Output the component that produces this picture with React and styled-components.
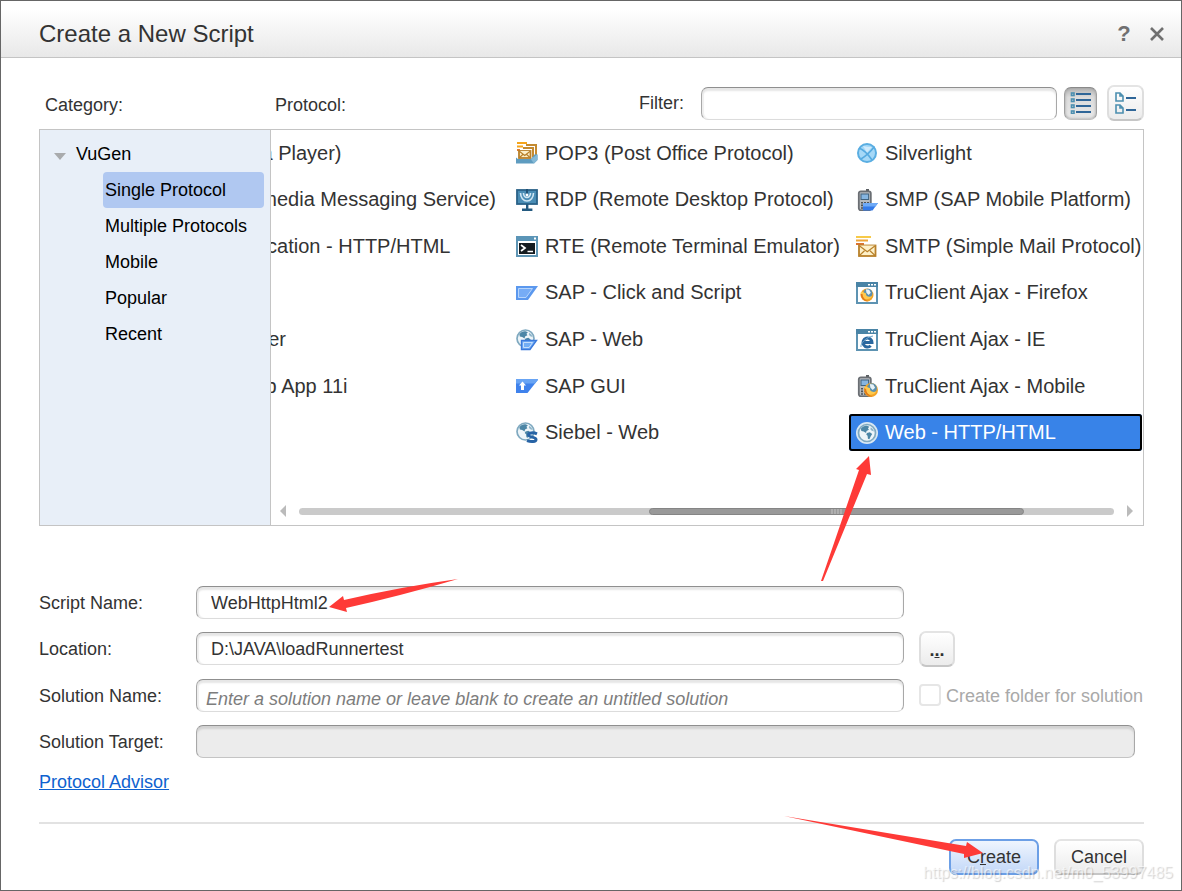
import React, { useState } from "react";
import styled, { createGlobalStyle, css } from "styled-components";

const columns = [
  {
    items: [
      { name: "MMS (Media Player)" },
      { name: "MMS (Multimedia Messaging Service)" },
      { name: "Mobile Application - HTTP/HTML" },
      null,
      { name: "Oracle - 2 Tier" },
      { name: "Oracle - Web App 11i" },
    ],
  },
  {
    width: 334,
    items: [
      { name: "POP3 (Post Office Protocol)", icon: "pop3" },
      { name: "RDP (Remote Desktop Protocol)", icon: "rdp" },
      { name: "RTE (Remote Terminal Emulator)", icon: "rte" },
      { name: "SAP - Click and Script", icon: "sapClick" },
      { name: "SAP - Web", icon: "sapWeb" },
      { name: "SAP GUI", icon: "sapGui" },
      { name: "Siebel - Web", icon: "siebel" },
    ],
  },
  {
    width: 293,
    items: [
      { name: "Silverlight", icon: "silverlight" },
      { name: "SMP (SAP Mobile Platform)", icon: "smp" },
      { name: "SMTP (Simple Mail Protocol)", icon: "smtp" },
      { name: "TruClient Ajax - Firefox", icon: "firefox" },
      { name: "TruClient Ajax - IE", icon: "ie" },
      { name: "TruClient Ajax - Mobile", icon: "mobile" },
      { name: "Web - HTTP/HTML", icon: "web" },
    ],
  },
];

const categories = [
  "Single Protocol",
  "Multiple Protocols",
  "Mobile",
  "Popular",
  "Recent",
];

const Globe = ({ cx = 10, cy = 10, r = 9 }) => (
  <g transform={`translate(${cx} ${cy}) scale(${r / 9})`}>
    <circle r="9" fill="#eef5f9" stroke="#7fa9c0" strokeWidth="1.8" />
    <path
      d="M-6.5-4.5C-5-7-2-8 0-7.6L2.5-6.5 1-5 2-3.5-.5-2-1 0-3.5-1.5-6-2z"
      fill="#4c86a6"
    />
    <path d="M0 0 3-.8 5.5 1 4 3.5 2.5 6.5 1 6 .6 3-.8 1.5z" fill="#4c86a6" />
    <path d="M4-6 6.5-4 7.4-1.5 5-2.5 3.5-4z" fill="#8fb6cb" />
  </g>
);

const Envelope = ({ x, y, w, h }) => (
  <g fill="#fdf0c8" stroke="#b8802a" strokeWidth="1.8">
    <rect x={x} y={y} width={w} height={h} />
    <path
      d={`M${x} ${y}L${x + w / 2} ${y + h / 2 + 1}L${x + w} ${y}M${x} ${y + h}L${x + w / 3} ${y + h / 2}M${x + w} ${y + h}L${x + (w * 2) / 3} ${y + h / 2}`}
      strokeWidth="1.2"
    />
  </g>
);

const BrowserWindow = ({ children }) => (
  <>
    <rect x="1" y="1" width="20" height="20" fill="#fff" stroke="#5d93b2" strokeWidth="2" />
    <path d="M0 0h22v5H0z" fill="#4a84a6" />
    <path d="M12 2h2v1.5h-2zM15 2h2v1.5h-2zM18 2h2v1.5h-2z" fill="#fff" />
    {children}
  </>
);

const FirefoxBall = ({ cx, cy, r }) => (
  <g transform={`translate(${cx} ${cy}) scale(${r / 6})`}>
    <circle r="6" fill="#f3a426" />
    <circle cx=".8" cy="-1.6" r="4.2" fill="#5a91b0" />
    <path d="M-1-5.2 2-4.8 3.5-2 1.5 0-.5-2z" fill="#e8f2f7" />
    <path d="M-5.8-2.5C-4-4-3-2-.8-1.5-1.5.5 1 2.5 4.6 1.2 3 4.5-3 5.5-5.2 1z" fill="#ffc94d" />
    <path d="M-5.8-1C-5.5 4.5-1 6 1.5 5.8-2 4.5-4 2.5-4.2-1z" fill="#e27818" />
  </g>
);

const Phone = () => (
  <>
    <path d="M10 0h3v3h-3z" fill="#5b5f63" />
    <rect x="2.8" y="2.3" width="12" height="19" rx="2" fill="#b7bbbf" stroke="#6a6e73" strokeWidth="1.8" />
    <rect x="5" y="5" width="7.6" height="5.5" fill="#86b5e0" stroke="#41637f" />
    <path
      d="M5 13h2v1.6H5zm3 0h2v1.6H8zm3 0h2v1.6h-2zM5 15.6h2v1.6H5zm3 0h2v1.6H8zm3 0h2v1.6h-2zM5 18.2h2v1.6H5zm3 0h2v1.6H8z"
      fill="#4f5459"
    />
  </>
);

const icons = {
  pop3: (
    <>
      <path d="M1 1h10M1 4.5h6" stroke="#f5a51c" strokeWidth="1.8" />
      <path d="M1 8h3" stroke="#e0701c" strokeWidth="1.8" />
      <path d="M10 3h10v10M7 6h10v9" fill="none" stroke="#c48a30" strokeWidth="2" />
      <Envelope x={3} y={9} w={11.5} h={7} />
      <path d="M0 15.5l2 1.5h13l4-5 2.5 1v5L18 21.5H0z" fill="#5e9cc0" />
      <path d="M15 17.5 21.5 12v6L18 21.5z" fill="#84b9d6" />
    </>
  ),
  rdp: (
    <>
      <rect x="1" y="1" width="20" height="14" fill="#4a8db5" stroke="#2b6288" strokeWidth="1.8" />
      <path d="M4.5 4a6.5 8 0 0 0 13 0M7.5 4a3.5 4.5 0 0 0 7 0" fill="none" stroke="#cfe6f3" strokeWidth="1.6" />
      <path d="M11 0v6" stroke="#1f5276" strokeWidth="2" />
      <circle cx="11" cy="6" r="1.4" fill="#fff" />
      <path d="M10 15h2.4v5H10zM6 19.5h10.4V22H6z" fill="#235a80" />
    </>
  ),
  rte: (
    <>
      <rect x="1" y="2" width="20" height="19" fill="#fff" stroke="#5f95b4" strokeWidth="2" />
      <path d="M0 1h22v5H0z" fill="#5b95b7" />
      <path d="M18 2.5h2v2h-2z" fill="#fff" />
      <path d="M3 8h16v11H3z" fill="#151b20" />
      <path d="M5 10l4 3-4 3M11.5 16.5H17" fill="none" stroke="#fff" strokeWidth="1.7" />
    </>
  ),
  sapClick: (
    <>
      <path d="M0 4h22L12 18H0z" fill="#5b98ee" />
      <path d="M2.5 6.5h14L10 15.5H2.5z" fill="#76acf6" stroke="#b6d5fc" />
    </>
  ),
  sapWeb: (
    <>
      <Globe cx={9.5} cy={9.5} r={8.5} />
      <path d="M5.5 11.5H20.5L14 20.5H5.5z" fill="#72adf5" stroke="#3a79dc" strokeWidth="1.4" />
      <path d="M7.5 13.5h9l-3.4 5H7.5z" fill="none" stroke="#c5defc" />
    </>
  ),
  sapGui: (
    <>
      <path d="M0 4h22.5L11.5 18H0z" fill="#3f82ec" />
      <path d="M0 4h22.5L19 8.5H0z" fill="#68a4f4" />
      <path d="M6.5 6.5 10 10.5H8v4.5H5v-4.5H3z" fill="#fff" />
    </>
  ),
  siebel: (
    <>
      <Globe cx={9.5} cy={9.5} r={8.5} />
      <path
        d="M21 11.8c-3.5-1.5-8.8-1.200-8.5 1.200.2 2.600 7.500 1.700 7.500 4.400 0 2.600-5 2.700-9 1.200"
        fill="none"
        stroke="#2763a5"
        strokeWidth="3"
      />
    </>
  ),
  silverlight: (
    <>
      <circle cx="11" cy="11" r="9" fill="#a5d8f7" stroke="#5aaee2" strokeWidth="2" />
      <path
        d="M3 6C8 8 12 12 16 18M18.5 4.5C15 9 10 14 5 17"
        fill="none"
        stroke="#55aae0"
        strokeWidth="1.6"
      />
      <path d="M7 4c3 1 6 1 9 1l-5 5.5z" fill="#cfeafc" />
    </>
  ),
  smp: (
    <>
      <Phone />
      <path d="M7 14h15l-5.5 7.5H7z" fill="#347ae8" />
      <path d="M7 14h15l-2.5 3.5H7z" fill="#6faaf6" />
    </>
  ),
  smtp: (
    <>
      <path d="M0 2h15" stroke="#f7ca48" strokeWidth="2" />
      <path d="M0 5.5h12" stroke="#eda53a" strokeWidth="2" />
      <path d="M0 9h8" stroke="#db7330" strokeWidth="2" />
      <Envelope x={3} y={10.5} w={16.5} h={10.5} />
    </>
  ),
  firefox: (
    <BrowserWindow>
      <FirefoxBall cx={11} cy={13} r={6.5} />
    </BrowserWindow>
  ),
  ie: (
    <BrowserWindow>
      <path
        d="M7 13.5h9a4.5 4.5 0 1 0-1.3 3.2"
        fill="none"
        stroke="#2b689f"
        strokeWidth="3"
      />
      <path d="M5 18c-1-3 5-10 12-11" fill="none" stroke="#6ba4cc" />
    </BrowserWindow>
  ),
  mobile: (
    <>
      <Phone />
      <FirefoxBall cx={15} cy={15} r={7} />
    </>
  ),
  web: (
    <>
      <circle cx="11" cy="11" r="11" fill="#d9e8f3" />
      <Globe cx={11} cy={11} r={8.5} />
    </>
  ),
};

const ListIcon = () => (
  <svg width="22" height="22" viewBox="0 0 22 22" fill="none" aria-hidden="true">
    {[2, 8, 14, 20].map((y) => (
      <g key={y}>
        <rect x="1.5" y={y - 1} width="2.5" height="2.5" stroke="#4c8fb0" strokeWidth="1.6" />
        <path d={`M6 ${y}h15`} stroke="#2f6698" strokeWidth="2" />
      </g>
    ))}
  </svg>
);

const DetailIcon = () => (
  <svg width="22" height="24" viewBox="0 0 22 24" fill="none" aria-hidden="true">
    {[2, 14].map((y) => (
      <g key={y}>
        <path
          d={`M1 ${y}h4l3 3v5H1zM5 ${y}v3h3`}
          stroke="#4c8fb0"
          strokeWidth="1.6"
        />
        <path d={`M11 ${y + 5}h10`} stroke="#2f6698" strokeWidth="2" />
      </g>
    ))}
  </svg>
);

export default function App() {
  const [category, setCategory] = useState("Single Protocol");
  const [protocol, setProtocol] = useState("Web - HTTP/HTML");

  return (
    <>
      <GlobalStyle />
      <Dialog>
        <Header>
          <Title>Create a New Script</Title>
          <HeaderButton aria-label="Help">?</HeaderButton>
          <HeaderButton aria-label="Close">
            <svg width="16" height="16" viewBox="0 0 16 16" aria-hidden="true">
              <path d="M2 2l12 12M14 2L2 14" stroke="#707070" strokeWidth="2.6" />
            </svg>
          </HeaderButton>
        </Header>

        <Body>
          <Toolbar>
            <CategoryCaption>Category:</CategoryCaption>
            <ProtocolCaption>Protocol:</ProtocolCaption>
            <label htmlFor="filter">Filter:</label>
            <FilterInput id="filter" />
            <ViewButton $pressed aria-label="List view">
              <ListIcon />
            </ViewButton>
            <ViewButton aria-label="Detail view">
              <DetailIcon />
            </ViewButton>
          </Toolbar>

          <Panel>
            <Sidebar>
              <TreeRoot>
                <svg width="14" height="8" viewBox="0 0 14 8" aria-hidden="true">
                  <path d="M1 1h12L7 8z" fill="#a9abad" />
                </svg>
                VuGen
              </TreeRoot>
              {categories.map((item) => (
                <TreeItem
                  key={item}
                  $active={item === category}
                  onClick={() => setCategory(item)}
                >
                  {item}
                </TreeItem>
              ))}
            </Sidebar>

            <ListArea>
              <Columns>
                {columns.map((column, index) => (
                  <Column key={index} $width={column.width}>
                    {column.items.map((item, row) => (
                      <li key={row}>
                        {item && (
                          <Protocol
                            $active={item.name === protocol}
                            onClick={() => setProtocol(item.name)}
                          >
                            <ProtocolIcon viewBox="0 0 22 22" aria-hidden="true">
                              {icons[item.icon]}
                            </ProtocolIcon>
                            {item.name}
                          </Protocol>
                        )}
                      </li>
                    ))}
                  </Column>
                ))}
              </Columns>
              <Scrollbar>
                <svg width="6" height="12" viewBox="0 0 6 12" aria-hidden="true">
                  <path d="M6 0v12L0 6z" fill="#bbb" />
                </svg>
                <Track>
                  <Thumb>
                    <svg width="12" height="5" viewBox="0 0 12 5" aria-hidden="true">
                      <path d="M1 0v5M4 0v5M7 0v5M10 0v5" stroke="#c4c4c4" />
                    </svg>
                  </Thumb>
                </Track>
                <svg width="6" height="12" viewBox="0 0 6 12" aria-hidden="true">
                  <path d="M0 0v12l6-6z" fill="#bbb" />
                </svg>
              </Scrollbar>
            </ListArea>
          </Panel>

          <Form>
            <Label htmlFor="script">Script Name:</Label>
            <Input id="script" defaultValue="WebHttpHtml2" />
            <span />

            <Label htmlFor="location">Location:</Label>
            <Input id="location" defaultValue="D:\JAVA\loadRunnertest" />
            <BrowseButton type="button" aria-label="Browse">
              .<u>.</u>.
            </BrowseButton>

            <Label htmlFor="solution">Solution Name:</Label>
            <HintInput
              id="solution"
              placeholder="Enter a solution name or leave blank to create an untitled solution"
            />
            <CheckLabel>
              <Checkbox type="checkbox" disabled />
              <span>Create folder for solution</span>
            </CheckLabel>

            <Label htmlFor="target">Solution Target:</Label>
            <TargetInput id="target" disabled />
          </Form>

          <AdvisorLink href="#advisor">Protocol Advisor</AdvisorLink>

          <Footer>
            <Button $primary>
              C<u>r</u>eate
            </Button>
            <Button>Cancel</Button>
          </Footer>
        </Body>

        <Arrows width="1182" height="891" viewBox="0 0 1182 891" aria-hidden="true">
          <path d="M869 456L856 469 859 470 821 581H823L867 474 871 475Z" />
          <path d="M329 607L343 596 344 600Q400 587 458 579Q400 596 346 608L347 612Z" />
          <path d="M983 853L967 842 966 846 784 816 964 854V858Z" />
        </Arrows>
        <Watermark>https://blog.csdn.net/m0_53997485</Watermark>
      </Dialog>
    </>
  );
}

const GlobalStyle = createGlobalStyle`
  * {
    box-sizing: border-box;
  }

  body {
    margin: 0;
    background: #fff;
  }

  body, button, input {
    font-family: "Liberation Sans", Arial, sans-serif;
    font-size: 18px;
    color: #333;
  }

  button {
    margin: 0;
    padding: 0;
    border: none;
    background: none;
    cursor: pointer;
  }
`;

const Dialog = styled.div`
  position: relative;
  min-height: 100vh;
  border: 1px solid #666;
  overflow: hidden;
`;

const Header = styled.header`
  display: flex;
  align-items: center;
  gap: 13px;
  height: 57px;
  padding: 9px 14px 0 38px;
  border-bottom: 1px solid #c4c4c4;
  background: linear-gradient(#fff 15%, #e8e8e8);
`;

const Title = styled.h1`
  flex: 1;
  margin: 0;
  font-size: 24px;
  font-weight: normal;
`;

const HeaderButton = styled.button`
  display: flex;
  align-items: center;
  justify-content: center;
  width: 20px;
  height: 24px;
  font-size: 22px;
  font-weight: bold;
  color: #707070;
`;

const Body = styled.main`
  padding: 27px 37px 15px 38px;
`;

const Toolbar = styled.div`
  display: flex;
  align-items: center;
  height: 36px;
  margin-bottom: 8px;
`;

const CategoryCaption = styled.span`
  width: 236px;
  padding: 4px 0 0 6px;
`;

const ProtocolCaption = styled.span`
  flex: 1;
  padding-top: 4px;
`;

const Input = styled.input`
  width: 100%;
  height: 33px;
  padding: 2px 14px 0;
  border: 1px solid;
  border-color: #8f8f8f #a8a8a8 #dcdcdc;
  border-radius: 7px;
  background: #fff;
  box-shadow: inset 0 3px 2px #e6e6e6, inset 2px 0 1px #f0f0f0;
  outline: none;
`;

const FilterInput = styled(Input)`
  width: 356px;
  margin: 0 7px 0 17px;
`;

const HintInput = styled(Input)`
  padding: 8px 9px 0;
  &::placeholder {
    color: #7d7d7d;
    font-style: italic;
    opacity: 1;
  }
`;

const TargetInput = styled(Input)`
  grid-column: 2 / 4;
  width: auto;
  margin-right: 9px;
  border-bottom-color: #c4c4c4;
  background: #ececec;
  box-shadow: inset 0 3px 2px #d2d2d2;
`;

const raised = css`
  border: 2px solid;
  border-color: #e4e4e4 #dedede #c6c6c6;
  border-radius: 7px;
  background: linear-gradient(#fff, #ececec);
`;

const ViewButton = styled.button`
  display: flex;
  align-items: center;
  justify-content: center;
  width: 37px;
  height: 36px;
  ${raised}

  ${({ $pressed }) =>
    $pressed &&
    css`
      width: 33px;
      height: 33px;
      margin-right: 10px;
      border: 1px solid;
      border-color: #8a8a8a #a0a0a0 #c0c0c0;
      background: linear-gradient(#b4b4b4, #dcdcdc 30%, #e8e8e8);
      box-shadow: inset 0 0 3px #999;
    `}
`;

const Panel = styled.section`
  display: flex;
  height: 397px;
  border: 1px solid #c4c4c4;
`;

const Sidebar = styled.nav`
  display: flex;
  flex-direction: column;
  flex-shrink: 0;
  width: 231px;
  padding: 6px;
  border-right: 1px solid #c4c4c4;
  background: #e8eff8;
`;

const TreeRoot = styled.div`
  display: flex;
  align-items: center;
  gap: 9px;
  height: 36px;
  padding-left: 7px;
  color: #000;

  svg {
    margin-top: 4px;
  }
`;

const TreeItem = styled.button`
  height: 36px;
  margin-left: 57px;
  padding-left: 2px;
  border-radius: 4px;
  background: ${({ $active }) => ($active ? "#b0c8f1" : "none")};
  color: #000;
  text-align: left;
`;

const ListArea = styled.div`
  display: flex;
  flex: 1;
  flex-direction: column;
  justify-content: space-between;
  min-width: 0;
`;

/* scrolled to the far end, so the first column runs out on the left */
const Columns = styled.div`
  display: flex;
  justify-content: flex-end;
  gap: 6px;
  padding-right: 1px;
  overflow: hidden;
`;

const Column = styled.ul`
  display: grid;
  grid-template-columns: minmax(0, 1fr);
  grid-template-rows: repeat(7, 1fr);
  align-items: center;
  flex-shrink: 0;
  width: ${({ $width }) => ($width ? `${$width}px` : "auto")};
  height: 326px;
  margin: 0;
  padding: 0;
  list-style: none;
`;

const Protocol = styled.button`
  display: flex;
  align-items: center;
  gap: 7px;
  width: 100%;
  height: 37px;
  padding: 0 7px;
  border-radius: 3px;
  font-size: 20px;
  white-space: nowrap;

  ${({ $active }) =>
    $active &&
    css`
      background: #3883e8;
      box-shadow: inset 0 0 0 2px #000;
      color: #fff;
    `}
`;

const ProtocolIcon = styled.svg`
  flex-shrink: 0;
  width: 22px;
  height: 22px;
`;

const Scrollbar = styled.div`
  display: flex;
  align-items: center;
  gap: 13px;
  height: 28px;
  padding: 0 10px 0 9px;
`;

const Track = styled.div`
  flex: 1;
  height: 7px;
  border-radius: 4px;
  background: #cacaca;
`;

const Thumb = styled.div`
  display: flex;
  align-items: center;
  justify-content: center;
  width: 46%;
  height: 7px;
  margin-left: 43%;
  border: 1px solid #858585;
  border-radius: 4px;
  background: #999;
`;

const Form = styled.form`
  display: grid;
  grid-template-columns: 142px 1fr 225px;
  grid-template-rows: repeat(4, 1fr);
  grid-column-gap: 15px;
  align-items: center;
  height: 186px;
  margin-top: 53px;
`;

const Label = styled.label`
  padding-top: 2px;
`;

const BrowseButton = styled.button`
  width: 36px;
  height: 36px;
  padding-top: 4px;
  font-weight: bold;
  ${raised}
`;

const CheckLabel = styled.label`
  display: flex;
  align-items: center;
  gap: 5px;
  color: #a9a9a9;
  white-space: nowrap;

  span {
    padding-top: 2px;
  }
`;

const Checkbox = styled.input`
  appearance: none;
  width: 22px;
  height: 22px;
  margin: 0;
  border: 2px solid #e6e6e6;
  border-radius: 4px;
  background: #fff;
`;

const AdvisorLink = styled.a`
  display: inline-block;
  margin-top: 6px;
  color: #0f62cf;
  line-height: 22px;
`;

const Footer = styled.footer`
  display: flex;
  justify-content: flex-end;
  gap: 15px;
  margin-top: 29px;
  padding-top: 15px;
  border-top: 2px solid #e2e2e2;
`;

const Button = styled.button`
  width: 90px;
  height: 36px;
  ${raised}

  ${({ $primary }) =>
    $primary &&
    css`
      border-color: #6c9fe6;
      background: linear-gradient(#eff5fe, #c3d8f8);
    `}
`;

/* annotation layer over the dialog */
const Arrows = styled.svg`
  position: absolute;
  top: -1px;
  left: -1px;
  fill: #fe3a37;
  pointer-events: none;
`;

const Watermark = styled.div`
  position: absolute;
  right: 8px;
  bottom: 6px;
  color: rgba(255, 255, 255, 0.6);
  font-size: 16px;
  line-height: 22px;
  text-shadow: 1px 1px 1px rgba(0, 0, 0, 0.18);
  pointer-events: none;
`;
